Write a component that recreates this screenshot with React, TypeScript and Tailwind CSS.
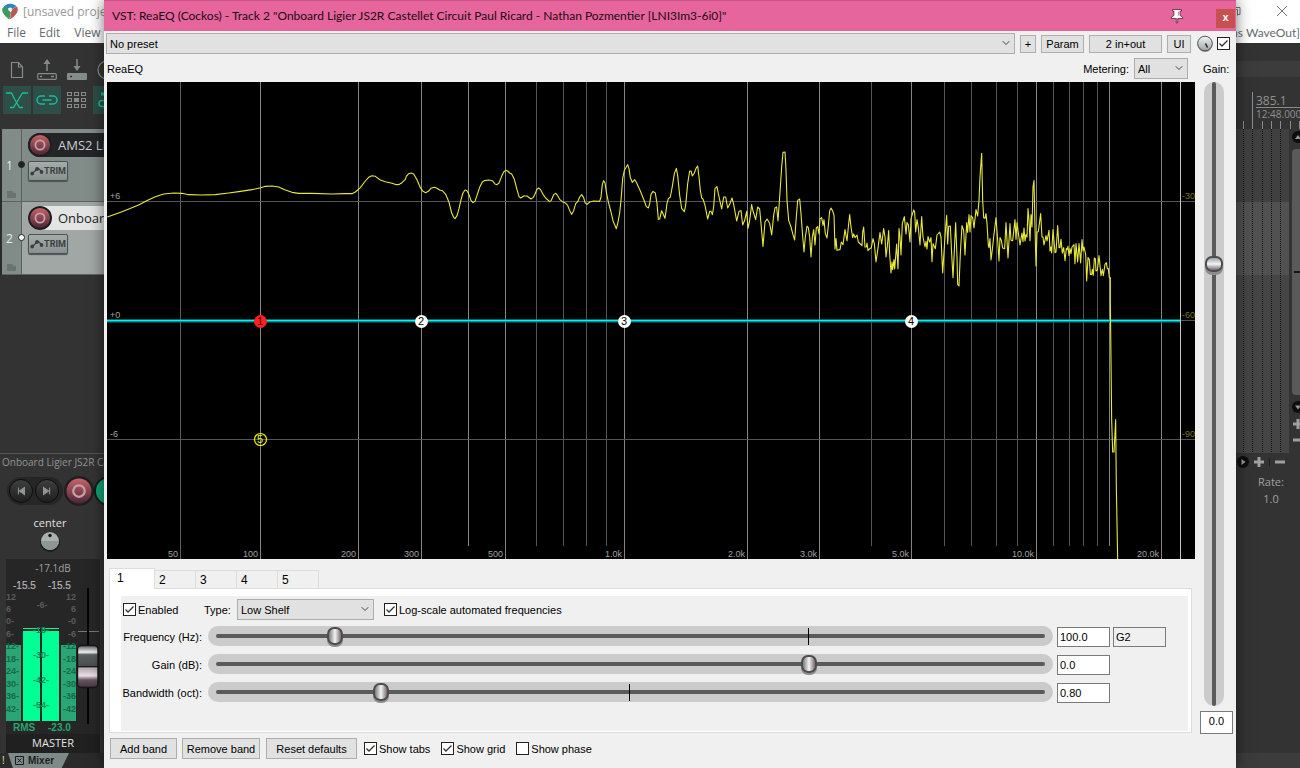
import { useState } from "react";
import type { ReactNode } from "react";
import { ChevronDown } from "lucide-react";

const SANS = "font-['Liberation_Sans',Arial,sans-serif]";
const HUMANIST = "font-['Open_Sans','Noto_Sans',sans-serif]";

/* Spectrum samples, three units per plot unit; each block counts from its own offset. */
const SPECTRUM: { offset: number; samples: string }[] = [
  {
    offset: -6,
    samples:
      "6,230 50,214 100,194 124,181 150,169 175,161 205,158 230,159 250,163 290,164 330,163 370,158 400,154 440,148 466,142 480,138 500,137 520,140 540,149 560,156 580,159 620,159 680,161 720,160 740,160 750,155 765,142 780,122 790,111 800,106 810,108 825,119 840,124 860,129 873,133 882,132 890,127 900,117",
  },
  {
    offset: 879,
    samples:
      "18,108 25,100 32,98 40,101 50,118 60,142 68,153 76,157 84,153 92,144 102,141 110,144 118,149 126,151 136,162 146,186 154,218 160,231 164,235 170,226 176,205 182,178 188,158 194,149 200,151 206,163 212,180 218,187 224,183 230,165 238,141 246,125 252,121 266,119 276,121 284,131 290,133 296,128 304,108 310,95 316,90 322,92 328,98 334,101 342,117 350,148 356,169 361,173 370,167 380,167 392,176 398,172 404,161 410,147 415,143 420,147 428,162 436,173 448,184 453,180 460,163 466,159 472,166 478,177 486,184 494,187 502,195 508,211 514,222 520,211 526,190 532,184 538,170 544,163 550,172 554,187 560,192 568,185 580,182 598,183 602,170 606,132 610,121 614,128 618,155 624,185 632,215 638,241 648,265 652,250 658,218 662,180 667,115 672,90 682,73 686,85 690,112 696,126 703,118 708,126 720,152 732,182 738,199 744,203 748,190 752,162 758,153 765,158 770,190 774,237 778,236 784,211 790,225 794,234 800,190 804,175 810,170 816,138 822,100 828,84 832,105 838,165 844,204 852,214 856,195 862,130 868,92 872,92 876,107 882,98 887,84 892,77",
  },
  {
    offset: 1749,
    samples:
      "26,110 30,150 34,173 38,176 44,195 52,236 58,213 62,213 66,223 70,200 74,145 80,139 84,160 94,206 100,170 106,170 112,203 118,192 125,173 130,192 139,242 146,213 152,211 157,254 163,240 169,213 173,264 178,240 184,193 188,212 196,238 202,200 208,206 212,250 218,318 224,245 230,236 238,249 244,284 250,225 254,203 259,200 263,242 268,170 274,80 278,36 284,35 287,90 290,180 295,240 302,260 308,283 313,299 318,230 322,180 328,176 332,220 336,275 341,335 345,290 350,257 354,262 358,290 362,350 366,290 370,268 374,314 378,262 382,259 386,281 389,235 394,232 398,255 401,238 405,280 410,293 414,255 418,212 422,203 427,212 431,225 434,326 437,295 440,330 446,328 449,328 453,305 458,313 464,268 470,302 474,260 478,223 482,260 487,292 490,281 494,292 500,284 504,305 510,311 515,316 517,275 520,260 524,320 528,320 530,308 533,331 538,325 543,322 548,295 552,310 557,365 562,330 569,277 574,311 580,265 584,290 587,350 591,318 595,271 598,340 602,398 605,365 607,388 611,358 613,386 619,311 623,385 626,265 629,290 632,344 636,250 642,229 647,281 650,247 654,253 659,305 662,235 670,209 673,215 676,275 680,238 684,262 689,314 694,229 698,290 704,320 707,303 710,326 713,289 718,305 722,292 725,364 728,310 735,325 740,284 748,275 752,290 757,398 762,320 766,260 769,225",
  },
  {
    offset: 2499,
    samples:
      "22,311 25,258 30,257 34,340 38,412 42,330 46,247 50,350 52,432 56,437 60,340 65,256 70,270 74,344 79,247 82,276 86,223 89,275 92,226 97,232 101,263 107,208 112,227 116,180 119,110 124,39 127,180 130,232 134,234 137,220 140,250 144,315 146,322 149,295 152,359 156,328 160,290 167,232 172,300 176,362 179,292 183,300 187,323 193,325 197,247 200,300 203,353 209,250 212,300 217,301 224,238 227,297 230,247 235,285 239,314 245,278 248,304 251,263 254,302 257,283 260,290 263,205 266,240 269,301 272,223 275,260 278,140 281,121 284,260 287,377 290,275 294,274 301,220 305,290 308,290 311,314 317,286 320,302 326,270 329,332 332,320 334,338 338,268 344,337 347,335 352,256 356,322 359,322 362,297 366,338 370,322 374,361 378,325 380,328 383,318 386,346 389,325 392,340 395,320 401,313 404,370 407,310 412,365 416,310 421,368 425,298 428,332 431,320 436,342 439,422 443,352 447,358 450,402 454,402 456,387 459,405 462,353 465,355 467,392 471,390 476,346 479,375 482,406 486,387 489,406 494,372 498,367 501,385 504,385 507,412 510,412 510,480 514,840 517,935 521,935 526,838 528,1040 532,1256",
  },
];

const spectrumPoints = SPECTRUM.flatMap(({ offset, samples }) =>
  samples.split(" ").map((pair) => {
    const [x, y] = pair.split(",").map(Number);
    return `${(x + offset + 1) / 3},${(y + 175) / 3}`;
  })
).join(" ");

const MAJOR: [number, string][] = [
  [73, "50"],
  [153, "100"],
  [251, "200"],
  [314, "300"],
  [398, "500"],
  [517, "1.0k"],
  [640, "2.0k"],
  [712, "3.0k"],
  [804, "5.0k"],
  [929, "10.0k"],
  [1054, "20.0k"],
];
const MINOR = [361, 429, 456, 479, 499, 764, 837, 864, 889, 910, 946, 962, 976, 990, 1002];
const LEVELS: [number, string, string][] = [
  [119, "+6", "-30"],
  [238, "+0", "-60"],
  [357, "-6", "-90"],
];

function Graph() {
  return (
    <svg viewBox="0 0 1088 477" className="block h-auto w-full bg-black" role="img" aria-label="Frequency response">
      <g shapeRendering="crispEdges" strokeWidth="1">
        {MINOR.map((x) => (
          <line key={x} x1={x + 0.5} x2={x + 0.5} y1="0" y2="464" stroke={x === 361 || x === 1002 ? "#858585" : "#555"} />
        ))}
        {MAJOR.map(([x]) => (
          <line key={x} x1={x + 0.5} x2={x + 0.5} y1="0" y2="477" stroke={x === 73 ? "#5c5c5c" : "#858585"} />
        ))}
        {LEVELS.map(([y]) => (
          <line key={y} x1="0" x2="1088" y1={y + 0.5} y2={y + 0.5} stroke="#555" />
        ))}
        <line x1="1073.5" x2="1073.5" y1="0" y2="477" stroke="#c8c8c8" />
      </g>
      <g fontFamily="'Liberation Sans', Arial, sans-serif" fontSize="9" fill="#a0a0a0">
        {MAJOR.map(([x, label]) => (
          <text key={label} x={x - 2} y="475" textAnchor="end">
            {label}
          </text>
        ))}
        {LEVELS.map(([y, left, right]) => (
          <g key={left}>
            <text x="3" y={y - 2}>
              {left}
            </text>
            <text x="1088" y={y - 2} textAnchor="end" fill="#7a7412">
              {right}
            </text>
          </g>
        ))}
      </g>
      <line x1="0" x2="1073" y1="239" y2="239" stroke="#00767a" strokeWidth="3" />
      <line x1="0" x2="1073" y1="238.5" y2="238.5" stroke="#00f4f4" strokeWidth="1.4" />
      <polyline points={spectrumPoints} fill="none" stroke="#e8e83c" strokeWidth="1.1" strokeLinejoin="round" />
      <g fontFamily="'Liberation Sans', Arial, sans-serif" fontSize="11" textAnchor="middle">
        {[
          [314, "2"],
          [517, "3"],
          [804, "4"],
        ].map(([x, n]) => (
          <g key={n}>
            <circle cx={Number(x) + 0.5} cy="239.5" r="6.5" fill="#fff" />
            <text x={Number(x)} y="243">
              {n}
            </text>
          </g>
        ))}
        <circle cx="153.5" cy="239.5" r="6.5" fill="#ff2020" />
        <text x="153" y="243" fill="#5a0000">
          1
        </text>
        <circle cx="153.5" cy="357.5" r="6" fill="none" stroke="#f0f000" strokeWidth="1.2" />
        <text x="153" y="361" fill="#f0f000">
          5
        </text>
      </g>
    </svg>
  );
}

function PushButton({ children, className = "" }: { children: ReactNode; className?: string }) {
  return (
    <button type="button" className={`flex shrink-0 items-center justify-center border border-[#adadad] bg-[#e1e1e1] ${className}`}>
      {children}
    </button>
  );
}

function DropDown({ label, options, className = "" }: { label: string; options: string[]; className?: string }) {
  return (
    <div className={`relative flex h-[21px] ${className}`}>
      <select aria-label={label} className="w-full appearance-none rounded-none border border-[#adadad] bg-[#e1e1e1] pl-[3px] outline-none">
        {options.map((o) => (
          <option key={o}>{o}</option>
        ))}
      </select>
      <ChevronDown className="pointer-events-none absolute right-[3px] top-1 size-3 text-[#444]" strokeWidth={2} />
    </div>
  );
}

function CheckBox({ label, hidden = false, on = true }: { label: string; hidden?: boolean; on?: boolean }) {
  const [checked, setChecked] = useState(on);
  return (
    <label className="flex shrink-0 items-center gap-0.5">
      <span className="relative flex size-[13px]">
        <input
          type="checkbox"
          aria-label={hidden ? label : undefined}
          checked={checked}
          onChange={(e) => setChecked(e.target.checked)}
          className="size-[13px] appearance-none border border-[#222] bg-white"
        />
        {checked && (
          <svg viewBox="0 0 13 13" className="pointer-events-none absolute inset-0 size-[13px]">
            <path d="M2.5 6.5 5 9 10.5 3.5" fill="none" stroke="#333" strokeWidth="1.3" />
          </svg>
        )}
      </span>
      {!hidden && <span>{label}</span>}
    </label>
  );
}

function BandSlider({
  id,
  label,
  position,
  value,
  tick,
  note,
}: {
  id: string;
  label: string;
  position: number;
  value: string;
  tick?: string;
  note?: string;
}) {
  return (
    <div className="flex h-5 items-center">
      <label htmlFor={id} className="flex w-[79px] shrink-0 justify-end whitespace-nowrap pt-px">
        {label}
      </label>
      <div className="relative ml-[6px] flex h-5 flex-1">
        <input
          id={id}
          type="range"
          min={0}
          max={1000}
          defaultValue={position}
          className="h-5 w-full appearance-none rounded-full bg-[#cbcbcb] px-2 outline-none [&::-webkit-slider-runnable-track]:h-1 [&::-webkit-slider-runnable-track]:rounded-sm [&::-webkit-slider-runnable-track]:bg-[#5a5a5a] [&::-webkit-slider-thumb]:-mt-[7px] [&::-webkit-slider-thumb]:h-[18px] [&::-webkit-slider-thumb]:w-4 [&::-webkit-slider-thumb]:appearance-none [&::-webkit-slider-thumb]:rounded-[7px] [&::-webkit-slider-thumb]:border-2 [&::-webkit-slider-thumb]:border-[#4c4c4c] [&::-webkit-slider-thumb]:bg-linear-to-r [&::-webkit-slider-thumb]:from-[#7d7d7d] [&::-webkit-slider-thumb]:via-[#f4f4f4] [&::-webkit-slider-thumb]:to-[#7a6a76] [&::-webkit-slider-thumb]:shadow-[0_2px_0_#8d8d8d]"
        />
        {tick && <span className={`pointer-events-none absolute top-0.5 h-[17px] w-px bg-black ${tick}`} />}
      </div>
      <div className="flex w-[113px] shrink-0 gap-[3px] pl-1 pt-px">
        <input
          aria-label={`${label} value`}
          defaultValue={value}
          className="h-5 w-[53px] border border-[#7a7a7a] bg-white px-0.5 outline-none"
        />
        {note && (
          <input
            aria-label="Note"
            readOnly
            defaultValue={note}
            className="h-5 w-[53px] border border-[#7a7a7a] bg-[#f0f0f0] px-0.5 outline-none"
          />
        )}
      </div>
    </div>
  );
}

function BandPanel() {
  return (
    <section className="ml-0.5 mr-[3px] mt-[9px]">
      <div role="tablist" className="flex h-5 items-end">
        {["1", "2", "3", "4", "5"].map((n) => (
          <button
            key={n}
            type="button"
            role="tab"
            aria-selected={n === "1"}
            className={
              n === "1"
                ? "z-10 -mb-px flex h-[21px] w-[46px] items-center border border-b-0 border-[#dcdcdc] bg-white pb-0.5 pl-[7px] text-[12px]"
                : "flex h-[18px] w-[41px] items-center border border-b-0 border-l-0 border-[#dcdcdc] bg-[#f0f0f0] pl-1 text-[12px]"
            }
          >
            {n}
          </button>
        ))}
      </div>
      <div className="border border-[#dcdcdc] bg-white pb-px pl-[11px] pr-[3px] pt-[7px]">
        <div className="flex flex-col gap-2 bg-[#f0f0f0] pb-[29px] pl-0.5 pr-[22px] pt-[3px]">
          <div className="-mb-0.5 flex items-center">
            <div className="w-[81px]">
              <CheckBox label="Enabled" />
            </div>
            <span className="w-[33px]">Type:</span>
            <DropDown label="Type" options={["Low Shelf", "High Shelf", "Band"]} className="mr-[10px] w-[137px]" />
            <CheckBox label="Log-scale automated frequencies" />
          </div>
          <BandSlider id="freq" label="Frequency (Hz):" position={137} value="100.0" note="G2" tick="left-[71%]" />
          <BandSlider id="gain" label="Gain (dB):" position={719} value="0.0" />
          <BandSlider id="bw" label="Bandwidth (oct):" position={193} value="0.80" tick="left-[49.8%]" />
        </div>
      </div>
    </section>
  );
}

function EffectWindow() {
  return (
    <main
      className={`absolute bottom-0 left-[104px] right-16 top-0 flex flex-col bg-[#f0f0f0] text-[11px] leading-4 text-black shadow-[0_0_14px_rgba(0,0,0,0.55)] ${SANS}`}
    >
      <header className="flex h-[31px] shrink-0 items-center border-t border-[#c8558a] bg-[#e6659c] pl-2">
        <h1 className="flex-1 truncate font-['Lato','Open_Sans',sans-serif] text-[12px] text-[#1c0a12]">
          VST: ReaEQ (Cockos) - Track 2 "Onboard Ligier JS2R Castellet Circuit Paul Ricard - Nathan Pozmentier [LNI3Im3-6i0]"
        </h1>
        <button type="button" aria-label="Pin window" className="mr-8">
          <svg viewBox="0 0 14 16" className="h-4 w-[14px]">
            <path
              d="M2.5 1.5h9v1.6h-1.4v4.4l2.6 1.6v1.4H7.7V15H6.3v-4.5h-5V9.100l2.600-1.600V3.100H2.500z"
              fill="#fff"
              stroke="#5a1f3a"
              strokeWidth=".8"
            />
            <path d="M8.400 3.600v4" stroke="#8b4a68" strokeWidth=".7" />
          </svg>
        </button>
        <button
          type="button"
          aria-label="Close"
          className="mr-px mt-1 flex h-[19px] w-[19px] items-center justify-center bg-[#c75050] pb-0.5 text-[11px] font-bold text-white"
        >
          x
        </button>
      </header>

      <div className="mt-0.5 flex h-[21px] items-center pl-0.5 pr-[6px]">
        <DropDown label="Preset" options={["No preset"]} className="mr-[5px] flex-1" />
        <PushButton className="mr-[5px] h-[18px] w-4">+</PushButton>
        <PushButton className="mr-[5px] h-[18px] w-[43px]">Param</PushButton>
        <PushButton className="mr-[5px] h-[18px] w-[73px]">2 in+out</PushButton>
        <PushButton className="mr-[6px] h-[18px] w-6">UI</PushButton>
        <svg viewBox="0 0 16 18" className="mr-1 h-[18px] w-4" role="img" aria-label="Wet/dry mix">
          <defs>
            <linearGradient id="wet" x2="0" y2="1">
              <stop offset="0" stopColor="#f3f5f5" />
              <stop offset="1" stopColor="#9ba5a4" />
            </linearGradient>
          </defs>
          <circle cx="8" cy="9.500" r="7.500" fill="#8c8c8c" />
          <circle cx="8" cy="8.500" r="7.300" fill="url(#wet)" stroke="#555" strokeWidth="1" />
          <path d="M8.500 8.500l2 4" stroke="#222" strokeWidth="1.600" />
        </svg>
        <CheckBox label="Effect enabled" hidden />
      </div>

      <div className="mt-1 flex h-[21px] items-center pl-[3px]">
        <span className="flex-1">ReaEQ</span>
        <span className="mr-[5px]">Metering:</span>
        <DropDown label="Metering" options={["All", "None"]} className="w-[54px]" />
        <span className="w-12 pl-[15px]">Gain:</span>
      </div>

      <div className="mt-[3px] flex min-h-0 flex-1">
        <div className="min-w-0 flex-1 pl-[3px]">
          <Graph />
          <BandPanel />
          <div className="mt-[5px] flex items-center pl-[3px]">
            <PushButton className="mr-[5px] h-[21px] w-[67px]">Add band</PushButton>
            <PushButton className="mr-[6px] h-[21px] w-[78px]">Remove band</PushButton>
            <PushButton className="mr-[7px] h-[21px] w-[91px]">Reset defaults</PushButton>
            <div className="flex gap-[11px]">
              <CheckBox label="Show tabs" />
              <CheckBox label="Show grid" />
              <CheckBox label="Show phase" on={false} />
            </div>
          </div>
        </div>
        <div className="flex w-[41px] shrink-0 flex-col items-center pb-[34px] pr-[3px]">
          <input
            type="range"
            aria-label="Output gain"
            min={0}
            max={1000}
            defaultValue={714}
            className="min-h-0 w-5 flex-1 appearance-none rounded-full bg-[#cbcbcb] py-2 outline-none [direction:rtl] [writing-mode:vertical-lr] [&::-webkit-slider-runnable-track]:w-1 [&::-webkit-slider-runnable-track]:rounded-sm [&::-webkit-slider-runnable-track]:bg-[#5a5a5a] [&::-webkit-slider-thumb]:-ml-[7px] [&::-webkit-slider-thumb]:h-4 [&::-webkit-slider-thumb]:w-[18px] [&::-webkit-slider-thumb]:appearance-none [&::-webkit-slider-thumb]:rounded-[7px] [&::-webkit-slider-thumb]:border-2 [&::-webkit-slider-thumb]:border-[#4c4c4c] [&::-webkit-slider-thumb]:bg-linear-to-b [&::-webkit-slider-thumb]:from-[#9aa3a2] [&::-webkit-slider-thumb]:via-[#f4f4f4] [&::-webkit-slider-thumb]:to-[#7a6a76] [&::-webkit-slider-thumb]:shadow-[0_3px_0_#8d8d8d]"
          />
          <input
            aria-label="Output gain value"
            defaultValue="0.0"
            className="ml-[5px] mt-[5px] h-[23px] w-[33px] border border-[#7a7a7a] bg-white pb-1 text-center outline-none"
          />
        </div>
      </div>
    </main>
  );
}

function RecordArm({ className = "" }: { className?: string }) {
  return (
    <svg viewBox="0 0 24 24" className={className} aria-hidden="true">
      <defs>
        <linearGradient id="arm" x2="0" y2="1">
          <stop offset="0" stopColor="#c86468" />
          <stop offset=".5" stopColor="#8a4450" />
          <stop offset="1" stopColor="#4c2636" />
        </linearGradient>
      </defs>
      <circle cx="12" cy="12" r="12" fill="#1f1f20" />
      <circle cx="12" cy="12" r="10" fill="url(#arm)" />
      <circle cx="12" cy="12" r="4.600" fill="none" stroke="#c3a3a6" strokeWidth="1.800" />
    </svg>
  );
}

function Track({ index, name, selected }: { index: number; name: string; selected: boolean }) {
  return (
    <div className={`flex h-[73px] border-b border-[#5c6361] ${selected ? "bg-[#a1a7a5]" : "bg-[#818b88]"}`}>
      <div className="relative flex w-5 flex-col items-center border-r border-[#5a605f] bg-[#818b88] pt-[29px] text-[12px] leading-4 text-[#e8ebea]">
        <span className="pr-1">{index}</span>
        <span
          className={`absolute -right-1 top-8 size-[7px] rounded-full border border-[#222] ${selected ? "bg-white" : "bg-[#222]"}`}
        />
        <svg viewBox="0 0 9 7" className="absolute bottom-[3px] left-[5px] h-[7px] w-[9px]">
          <path d="M0 0h5l2 2h2v5H0z" fill="#6b7371" />
        </svg>
      </div>
      <div className="min-w-0 flex-1 pl-[6px] pt-1">
        <div className={`flex h-6 items-center rounded-l-full ${selected ? "bg-[#e3e5e4] text-[#222]" : "bg-[#242526] text-[#c9cdd0]"}`}>
          <button type="button" aria-label={`Arm track ${index}`} className="size-6 shrink-0">
            <RecordArm className="size-6" />
          </button>
          <span className="ml-[6px] whitespace-nowrap pt-0.5 text-[13px]">{name}</span>
        </div>
        <button
          type="button"
          className="mt-1 flex h-5 w-10 items-center justify-center rounded-xs border border-[#4a5150] bg-linear-to-b from-[#a5adab] to-[#88918f] font-['Liberation_Sans_Narrow','Roboto',sans-serif] text-[9px] leading-none font-bold text-[#3a4040] shadow-[0_1px_1px_#4a5150]"
        >
          <svg viewBox="0 0 14 10" className="h-[10px] w-[14px] shrink-0" fill="#3a4040" stroke="#3a4040" strokeWidth="1.200">
            <path d="M2 8 6.500 3.500 8.500 2.500 12 6" fill="none" />
            <circle cx="2.200" cy="7.500" r="1.300" />
            <circle cx="7" cy="3" r="1.300" />
            <circle cx="11.500" cy="6" r="1.300" />
          </svg>
          TRIM
        </button>
      </div>
    </div>
  );
}

function ToolbarIcons() {
  return (
    <div className="grid grid-cols-[30px_30px_30px_30px] pl-0.5 pt-3 text-[#848c8a]">
      <button type="button" aria-label="New project" className="flex h-[30px] items-center justify-center">
        <svg viewBox="0 0 14 18" className="h-[18px] w-[14px]" fill="none" stroke="currentColor">
          <path d="M1.500 1.500h7l4 4.500v10.500h-11zM8.500 1.500v4.500h4" strokeWidth="1.200" />
        </svg>
      </button>
      <button type="button" aria-label="Open project" className="flex h-[30px] items-center justify-center">
        <svg viewBox="0 0 20 22" className="h-[22px] w-5" fill="none" stroke="currentColor">
          <path d="M10 12V3" strokeWidth="1.500" />
          <path d="M10 0 6.500 5h7z" fill="currentColor" stroke="none" />
          <rect x=".7" y="14.700" width="18.600" height="5.600" rx="1" strokeWidth="1.200" />
          <path d="M3 17.500h2M14 17.500h3" strokeWidth="1.500" />
        </svg>
      </button>
      <button type="button" aria-label="Save project" className="flex h-[30px] items-center justify-center">
        <svg viewBox="0 0 20 22" className="h-[22px] w-5" fill="none" stroke="currentColor">
          <path d="M10 0v9" strokeWidth="1.500" />
          <path d="M10 12 6.500 7h7z" fill="currentColor" stroke="none" />
          <rect x="0" y="14" width="20" height="7" rx="1" fill="currentColor" stroke="none" />
          <path d="M3 17.500h2" stroke="#333" strokeWidth="1.500" />
        </svg>
      </button>
      <button type="button" aria-label="Project settings" className="flex h-[30px] items-center justify-center">
        <svg viewBox="0 0 20 20" className="size-5" fill="none" stroke="currentColor">
          <circle cx="10" cy="10" r="9" strokeWidth="1.300" />
        </svg>
      </button>
      <button type="button" aria-label="Auto-crossfade" className="mx-px mt-px flex h-7 items-center justify-center bg-[#2d4f48] text-[#1abc9a]">
        <svg viewBox="0 0 24 20" className="h-5 w-6" fill="none" stroke="currentColor" strokeWidth="1.300">
          <path d="M1 3h5.500l3 6 5 8.500H18M23 3h-5.500l-9 14.500H5" />
        </svg>
      </button>
      <button type="button" aria-label="Item grouping" className="mx-px mt-px flex h-7 items-center justify-center bg-[#2d4f48] text-[#1abc9a]">
        <svg viewBox="0 0 24 12" className="h-3 w-6" fill="none" stroke="currentColor" strokeWidth="1.500">
          <path d="M10 2H6a4 4 0 0 0 0 8h4M14 2h4a4 4 0 0 1 0 8h-4M7.500 6h9" />
        </svg>
      </button>
      <button type="button" aria-label="Grid lines" className="mx-px mt-px flex h-7 items-center justify-center">
        <svg viewBox="0 0 20 18" className="h-[18px] w-5" fill="none" stroke="currentColor">
          {[1, 8, 15].map((x) =>
            [1, 7, 13].map((y) => (
              <rect key={`${x}-${y}`} x={x - 0.5} y={y + 0.5} width="4" height="3" fill={x === 8 && y === 7 ? "currentColor" : "none"} />
            ))
          )}
        </svg>
      </button>
      <button type="button" aria-label="Snap" className="ml-px mt-px flex h-7 items-center bg-[#2d4f48] pl-1 text-[#1abc9a]">
        <svg viewBox="0 0 16 16" className="size-4" fill="none" stroke="currentColor" strokeWidth="1.500">
          <path d="M4 2h6" strokeWidth="3" />
          <path d="M10 8.500H5a3 3 0 0 0 0 6h5" />
        </svg>
      </button>
    </div>
  );
}

const SIDE_SCALE: [number, string][] = [
  [41, "12"],
  [53, "6"],
  [65, "0"],
  [78, "6"],
  [90, "12"],
  [103, "18"],
  [115, "24"],
  [128, "30"],
  [140, "36"],
  [153, "42"],
];

function MasterMeter() {
  return (
    <svg viewBox="0 0 94 175" className="block h-[175px] w-[94px]" role="img" aria-label="Master level meter">
      <defs>
        <linearGradient id="fader" x2="0" y2="1">
          <stop offset="0" stopColor="#555c5b" />
          <stop offset=".16" stopColor="#f0f2f2" />
          <stop offset=".22" stopColor="#5a605f" />
          <stop offset=".48" stopColor="#48504e" />
          <stop offset=".5" stopColor="#1c1c1c" />
          <stop offset=".54" stopColor="#b8a8b2" />
          <stop offset=".72" stopColor="#e8e0e4" />
          <stop offset=".82" stopColor="#6a5461" />
          <stop offset="1" stopColor="#43363e" />
        </linearGradient>
      </defs>
      <rect x="0" y="86" width="15" height="76" fill="#2aa574" />
      <rect x="55" y="86" width="15" height="76" fill="#2aa574" />
      <rect x="17" y="69" width="17" height="1" fill="#00ff94" />
      <rect x="36" y="69" width="17" height="1" fill="#00ff94" />
      <rect x="17" y="72" width="17" height="90" fill="#00ff94" />
      <rect x="36" y="72" width="17" height="90" fill="#00ff94" />
      <text x="47" y="13" textAnchor="middle" fontFamily="'Open Sans', sans-serif" fontSize="10" fill="#a0a0a0">
        -17.1dB
      </text>
      <g fontFamily="'Liberation Sans', Arial, sans-serif" fontSize="9" fontWeight="bold">
        <g fontSize="10" fontWeight="normal" fill="#b4b4b4" stroke="#b4b4b4" strokeWidth=".2">
          <text x="7" y="30">-15.5</text>
          <text x="42" y="30">-15.5</text>
        </g>
        {SIDE_SCALE.map(([y, t], i) => (
          <g key={y} fill={i > 3 ? "#17694a" : "#5a5a5a"}>
            <text x="0" y={y}>
              {i > 1 ? `${t}-` : t}
            </text>
            <text x="70" y={y} textAnchor="end">
              {i > 1 ? `-${t}` : t}
            </text>
          </g>
        ))}
        <g textAnchor="middle">
          <text x="36" y="49" fill="#5a5a5a">-6-</text>
          <text x="35" y="74" fill="#0b8a56">-18-</text>
          <text x="35" y="99" fill="#0b8a56">-30-</text>
          <text x="35" y="124" fill="#0b8a56">-42-</text>
          <text x="35" y="149" fill="#0b8a56">-54-</text>
        </g>
        <g fontSize="10" fill="#2aa574">
          <text x="7" y="172">RMS</text>
          <text x="42" y="172">-23.0</text>
        </g>
      </g>
      <path d="M72 72.500h21" stroke="#777" />
      <path d="M82 29v136" stroke="#050505" strokeWidth="2" />
      <rect x="71.500" y="86.500" width="20.500" height="42" rx="4" fill="url(#fader)" stroke="#151515" strokeWidth="1.400" />
    </svg>
  );
}

function LeftDock() {
  return (
    <div className="flex w-[104px] shrink-0 flex-col">
      <div className="h-[86px]">
        <ToolbarIcons />
      </div>
      <div className="border-l-2 border-[#2b2b2b]">
        <Track index={1} name="AMS2 Ligier" selected={false} />
        <Track index={2} name="Onboard Ligier" selected />
      </div>
      <div className="mt-[178px] whitespace-nowrap border-t border-[#555] pl-0.5 text-[10px] leading-4 text-[#8f9594]">
        Onboard Ligier JS2R Castellet
      </div>
      <div className="mt-[6px] flex h-[30px] items-center overflow-hidden pl-[7px]">
        <div className="flex rounded-full bg-[#262626] p-0.5">
          {["M5 4v8M12 4v8L6 8z", "M11 4v8M4 4v8l6-4z"].map((d, i) => (
            <button
              key={d}
              type="button"
              aria-label={i ? "Go to end" : "Go to start"}
              className="mr-[2px] flex size-6 items-center justify-center rounded-full border border-[#0c0c0c] bg-linear-to-b from-[#3f3f3f] to-[#202020]"
            >
              <svg viewBox="0 0 16 16" className="size-[14px]" fill="#8f9594" stroke="#8f9594" strokeWidth="1.200">
                <path d={d} />
              </svg>
            </button>
          ))}
        </div>
        <button type="button" aria-label="Record" className="ml-px size-[30px] shrink-0">
          <RecordArm className="size-[30px]" />
        </button>
        <button type="button" aria-label="Play" className="size-[30px] shrink-0 rounded-full border-2 border-[#161616] bg-[#0fa574]" />
      </div>
      <div className="mt-[9px] flex flex-col items-center pr-1 text-[#e0e0e0]">
        <span className="text-[11px] leading-4">center</span>
        <svg viewBox="0 0 20 21" className="h-[21px] w-5" role="img" aria-label="Pan">
          <circle cx="10" cy="11" r="10" fill="#1c1c1c" />
          <circle cx="10" cy="10" r="9" fill="#a9b1af" />
          <path d="M1 10a9 9 0 0 0 18 0z" fill="#8d9694" />
          <circle cx="10" cy="4.500" r="1.700" fill="#151515" />
        </svg>
      </div>
      <div className="ml-[6px] mr-1 mt-[7px] bg-[#262626]">
        <MasterMeter />
        <div className="bg-[#202020] pb-0.5 text-center text-[11px] leading-[17px] text-[#e4e4e4]">MASTER</div>
      </div>
      <div className="flex h-[15px] bg-[#2b2b2b]">
        <span className="w-2 pl-0.5 text-[10px] leading-[14px] text-[#e6e69c]">!</span>
        <button
          type="button"
          className="flex w-[61px] items-center gap-1 bg-[#7e8a87] pl-[7px] font-['Liberation_Sans',Arial,sans-serif] text-[10px] leading-none font-bold text-[#1c1c1c] [clip-path:polygon(0_0,100%_0,88%_100%,8%_100%)]"
        >
          <svg viewBox="0 0 9 9" className="size-[9px] shrink-0" fill="none" stroke="#1c1c1c">
            <path d="M.5.5h8v8h-8zM2.500 2.500l4 4M6.500 2.500l-4 4" />
          </svg>
          Mixer
        </button>
      </div>
    </div>
  );
}

function ScrollArrow({ d }: { d: string }) {
  return (
    <svg viewBox="0 0 12 12" className="size-3 shrink-0">
      <circle cx="6" cy="6" r="6" fill="#0d0d0d" />
      <path d={d} fill="#999" />
    </svg>
  );
}

function PlusMinus({ plus }: { plus?: boolean }) {
  return (
    <svg viewBox="0 0 10 10" className="size-[10px] shrink-0" stroke="#a0a0a0" strokeWidth="3">
      <path d={plus ? "M0 5h10M5 0v10" : "M0 5h10"} />
    </svg>
  );
}

function RightDock() {
  return (
    <div className="flex w-16 shrink-0 flex-col overflow-hidden text-[#909090]">
      <div className="mt-[18px] h-4 bg-[#3c3c3c]" />
      <div className="flex h-[52px] flex-col justify-end">
        <div className="ml-4 border-l border-[#8a8a8a] pl-[3px] text-[11px] leading-[13px]">
          <div className="border-b border-[#8a8a8a] pt-0.5 text-[12px]">385.1</div>
          <div className="whitespace-nowrap text-[10px]">12:48.000</div>
        </div>
        <svg viewBox="0 0 64 8" className="block h-2 w-16" stroke="#8a8a8a" shapeRendering="crispEdges">
          <path d="M7.500 0v8M16.500 0v8M26.500 0v8M35.500 0v8M44.500 0v8M54.500 0v8M63.500 0v8" />
        </svg>
      </div>
      <div className="flex h-[324px]">
        <div className="relative w-[53px] shrink-0">
          <div className="h-[73px] bg-[#404040]" />
          <div className="h-[73px] bg-[#515151]" />
          <div className="h-[178px] bg-[#454545]" />
          <svg viewBox="0 0 53 324" className="absolute inset-0 h-full w-full" stroke="#151515" strokeDasharray="1 1" shapeRendering="crispEdges">
            <path d="M7.500 0v324M16.500 0v324M26.500 0v324M35.500 0v324M44.500 0v324" />
          </svg>
        </div>
        <div className="flex w-[14px] shrink-0 flex-col items-center gap-[6px] pl-[3px] pt-0.5">
          <ScrollArrow d="M3 8h6L6 4z" />
          <div className="flex h-[246px] w-3 items-center justify-center rounded-l-sm bg-[#5a5a5a]">
            <span className="h-0.5 w-2 bg-[#151515]" />
          </div>
          <ScrollArrow d="M3 4.500h6l-3 4z" />
          <PlusMinus plus />
          <PlusMinus />
        </div>
      </div>
      <div className="flex h-[18px] items-center pl-px">
        <ScrollArrow d="M4.500 3v6l4-3z" />
        <span className="w-[5px]" />
        <PlusMinus plus />
        <span className="mx-[5px] h-2 w-px bg-[#1c1c1c]" />
        <PlusMinus />
      </div>
      <div className="flex flex-col items-center pl-[6px] pt-0.5 text-[11px] leading-[17px] text-[#a0a0a0]">
        <span>Rate:</span>
        <span>1.0</span>
      </div>
      <div className="flex-1" />
      <div className="h-[15px] bg-[#3c3c3c]" />
    </div>
  );
}

export default function App() {
  return (
    <div className={`relative flex h-screen flex-col overflow-hidden bg-[#333] ${HUMANIST}`}>
      <header className="flex h-[43px] shrink-0 flex-col bg-white">
        <div className="flex h-[23px] items-center pl-0.5 text-[12px] text-[#999]">
          <svg viewBox="0 0 16 17" className="h-[17px] w-4" aria-hidden="true">
            <path d="M1 5C3 .5 11-.8 14.500 3.500L10 6.200 6 5z" fill="#2e86c1" />
            <path d="M.5 5 6 5 8.800 9.500 7.500 16.500C3 13.500-.8 9.500.5 5z" fill="#3e9a5c" />
            <path d="M15 3.500C17.500 8.500 13.500 13 8 16.500L8.800 9.500 10 6.200z" fill="#b9584f" />
            <circle cx="8.300" cy="6.500" r="2" fill="#e9efe9" />
          </svg>
          <span className="ml-[5px] flex-1 whitespace-nowrap">[unsaved project]</span>
          <svg viewBox="0 0 64 20" className="h-5 w-16" fill="none" stroke="#777">
            <path d="M-4.500 7.500h6v6M-2.500 5.500h6.500v7h-2" />
            <path d="M41 4l10 10M51 4 41 14" />
          </svg>
        </div>
        <nav className="flex h-5 items-center pl-[7px] text-[12px] text-[#666a70]">
          <a href="#file" className="mr-[13px]">
            File
          </a>
          <a href="#edit" className="mr-[14px]">
            Edit
          </a>
          <a href="#view" className="flex-1">
            View
          </a>
          <span className="whitespace-nowrap font-['Lato','Open_Sans',sans-serif]">ns WaveOut]</span>
        </nav>
      </header>
      <div className="flex flex-1 justify-between">
        <LeftDock />
        <RightDock />
      </div>
      <EffectWindow />
    </div>
  );
}
